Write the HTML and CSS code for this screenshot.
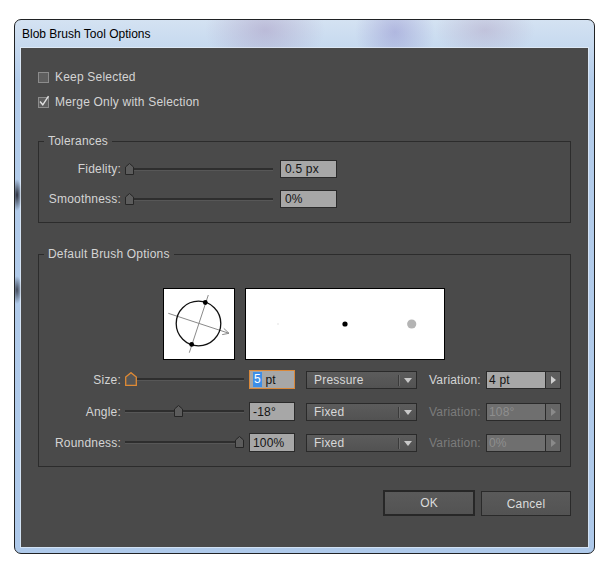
FILE: index.html
```html
<!DOCTYPE html>
<html>
<head>
<meta charset="utf-8">
<link rel="stylesheet" href="styles.css">
</head>
<body>
<div class="window">
  <div class="titlebar"><span class="title">Blob Brush Tool Options</span></div>
  <div class="client">
    <div class="check"><span class="box"></span><span>Keep Selected</span></div>
    <div class="check second"><span class="box"><svg width="13" height="13" viewBox="0 0 13 13"><polyline points="2,6.5 4.8,9.8 10.5,1.2" fill="none" stroke="#e0e0e0" stroke-width="1.4"/></svg></span><span>Merge Only with Selection</span></div>

    <fieldset class="group tol">
      <legend>Tolerances</legend>
      <div class="row">
        <span class="lbl">Fidelity:</span>
        <div class="slider tslider"><div class="track"></div><svg class="thumb" style="left:0px" width="9" height="12" viewBox="0 0 9 12"><polygon points="0.5,4 4.5,0.5 8.5,4 8.5,11.5 0.5,11.5" fill="#5c5c5c" stroke="#262626"/></svg></div>
        <span class="field tfield">0.5 px</span>
      </div>
      <div class="row next">
        <span class="lbl">Smoothness:</span>
        <div class="slider tslider"><div class="track"></div><svg class="thumb" style="left:0px" width="9" height="12" viewBox="0 0 9 12"><polygon points="0.5,4 4.5,0.5 8.5,4 8.5,11.5 0.5,11.5" fill="#5c5c5c" stroke="#262626"/></svg></div>
        <span class="field tfield">0%</span>
      </div>
    </fieldset>

    <fieldset class="group brush">
      <legend>Default Brush Options</legend>
      <div class="previews">
        <div class="pv pv1">
          <svg width="70" height="70" viewBox="0 0 70 70">
            <line x1="44.3" y1="6" x2="25.3" y2="63.7" stroke="#8a8a8a" stroke-width="1"/>
            <line x1="4.3" y1="24.3" x2="65" y2="44.3" stroke="#8a8a8a" stroke-width="1"/>
            <polyline points="59.8,39.4 65,44.3 58.2,45.6" fill="none" stroke="#8a8a8a" stroke-width="1"/>
            <circle cx="34.5" cy="34.5" r="22.3" fill="none" stroke="#111" stroke-width="1.3"/>
            <circle cx="41.3" cy="13.5" r="2.4" fill="#000"/>
            <circle cx="27.7" cy="55.4" r="2.4" fill="#000"/>
          </svg>
        </div>
        <div class="pv pv2">
          <svg width="198" height="70" viewBox="0 0 198 70">
            <circle cx="32" cy="35" r="0.7" fill="#d8d8d8"/>
            <circle cx="99" cy="35" r="2.6" fill="#000"/>
            <circle cx="165.7" cy="35" r="4.6" fill="#b4b4b4"/>
          </svg>
        </div>
      </div>

      <div class="row brow first">
        <span class="lbl">Size:</span>
        <div class="slider bslider"><div class="track"></div><svg class="thumb" style="left:0px;top:2px" width="12" height="14" viewBox="0 0 12 14"><polygon points="0.7,5 6,0.7 11.3,5 11.3,13.3 0.7,13.3" fill="#555" stroke="#e08a34" stroke-width="1.3"/></svg></div>
        <span class="field bfield focus"><span class="sel">5</span> pt</span>
        <span class="dd">Pressure<span class="sep"></span><span class="arr"></span></span>
        <span class="vlbl">Variation:</span>
        <span class="vfield"><span class="vval">4 pt</span><span class="vbtn"><span class="rarr"></span></span></span>
      </div>
      <div class="row brow second">
        <span class="lbl">Angle:</span>
        <div class="slider bslider"><div class="track"></div><svg class="thumb" style="left:49px" width="9" height="12" viewBox="0 0 9 12"><polygon points="0.5,4 4.5,0.5 8.5,4 8.5,11.5 0.5,11.5" fill="#5c5c5c" stroke="#262626"/></svg></div>
        <span class="field bfield">-18°</span>
        <span class="dd">Fixed<span class="sep"></span><span class="arr"></span></span>
        <span class="vlbl off">Variation:</span>
        <span class="vfield off"><span class="vval">108°</span><span class="vbtn"><span class="rarr"></span></span></span>
      </div>
      <div class="row brow third">
        <span class="lbl">Roundness:</span>
        <div class="slider bslider"><div class="track"></div><svg class="thumb" style="left:110px" width="9" height="12" viewBox="0 0 9 12"><polygon points="0.5,4 4.5,0.5 8.5,4 8.5,11.5 0.5,11.5" fill="#5c5c5c" stroke="#262626"/></svg></div>
        <span class="field bfield">100%</span>
        <span class="dd">Fixed<span class="sep"></span><span class="arr"></span></span>
        <span class="vlbl off">Variation:</span>
        <span class="vfield off"><span class="vval">0%</span><span class="vbtn"><span class="rarr"></span></span></span>
      </div>
    </fieldset>

    <div class="buttons">
      <span class="btn ok">OK</span>
      <span class="btn cancel">Cancel</span>
    </div>
  </div>
</div>
</body>
</html>
```
FILE: styles.css
```css
html, body {
  margin: 0;
  padding: 0;
  background: #ffffff;
}
body {
  font-family: "Liberation Sans", Arial, sans-serif;
  font-size: 12px;
  line-height: 16px;
}
.window {
  box-sizing: border-box;
  margin: 19px 0 0 14px;
  width: 581px;
  height: 535px;
  border: 1px solid #202224;
  border-radius: 7px;
  padding: 0 6px 6px 6px;
  display: flex;
  flex-direction: column;
  background:
    radial-gradient(ellipse 5px 16px at 2px 175px, rgba(20,20,30,0.85), rgba(20,20,30,0) 100%),
    radial-gradient(ellipse 5px 14px at 2px 270px, rgba(20,20,30,0.7), rgba(20,20,30,0) 100%),
    radial-gradient(ellipse 60px 40px at 250px 10px, rgba(150,120,170,0.35), rgba(150,120,170,0) 100%),
    radial-gradient(ellipse 40px 40px at 380px 12px, rgba(120,110,190,0.35), rgba(120,110,190,0) 100%),
    radial-gradient(ellipse 50px 30px at 470px 10px, rgba(160,130,170,0.3), rgba(160,130,170,0) 100%),
    linear-gradient(180deg, #d4e2f2 0px, #c6d9ef 28px, #b4cdeb 60px, #aec9ea 100%);
}
.titlebar {
  height: 28px;
  flex: none;
  display: flex;
}
.title {
  color: #000;
  padding: 6px 0 0 1px;
  line-height: 16px;
  font-size: 12px;
}
.client {
  flex: 1;
  background: #4a4a4a;
  box-shadow: 0 0 0 1px rgba(240,245,252,0.55);
  padding: 21px 17px 0 17px;
  color: #d4d4d4;
  letter-spacing: 0.2px;
}
.check {
  display: flex;
  align-items: center;
  height: 16px;
}
.check.second {
  margin-top: 9px;
}
.box {
  box-sizing: border-box;
  width: 11px;
  height: 11px;
  border: 1px solid #8c8c8c;
  background: #5e5e5e;
  margin-right: 6px;
  position: relative;
}
.box svg {
  position: absolute;
  left: -1px;
  top: -3px;
}
.group {
  box-sizing: border-box;
  margin: 23px 0 0 0;
  width: 533px;
  border: 1px solid #2c2c2c;
  padding: 0;
  min-width: 0;
}
.group legend {
  margin-left: 5px;
  padding: 0 4px;
  line-height: 16px;
  color: #d4d4d4;
}
.tol {
  padding: 11px 0 14px 0;
}
.brush {
  padding: 26px 0 14px 0;
}
.row {
  display: flex;
  align-items: center;
  height: 18px;
}
.row.next {
  margin-top: 12px;
}
.lbl {
  width: 82px;
  text-align: right;
  flex: none;
  color: #d4d4d4;
}
.slider {
  position: relative;
  margin-left: 4px;
  height: 18px;
  display: flex;
  align-items: center;
  flex: none;
}
.tslider { width: 148px; }
.bslider { width: 119px; }
.track {
  width: 100%;
  height: 3px;
  background: #2e2e2e;
  border-bottom: 1px solid #575757;
  box-sizing: border-box;
}
.thumb {
  position: absolute;
  top: 3px;
  display: block;
}
.field {
  box-sizing: border-box;
  height: 18px;
  border: 1px solid #2a2a2a;
  background: #a7a7a7;
  color: #141414;
  padding-left: 4px;
  line-height: 16px;
  flex: none;
  display: flex;
  align-items: center;
  white-space: pre;
}
.tfield {
  margin-left: 7px;
  width: 57px;
}
.brow {
  height: 19px;
}
.brow.first { margin-top: 10px; }
.brow.second { margin-top: 13px; }
.brow.third { margin-top: 12px; }
.brow .slider { height: 19px; }
.bfield {
  margin-left: 5px;
  width: 46px;
  height: 19px;
  padding-left: 3px;
}
.bfield.focus {
  border-color: #d9883a;
}
.sel {
  background: #3d8ee8;
  color: #fff;
  padding: 0 1px;
  line-height: 15px;
}
.previews {
  display: flex;
  gap: 10px;
  height: 72px;
  padding-left: 124px;
}
.pv {
  box-sizing: border-box;
  height: 72px;
  background: #fff;
  border: 1px solid #000;
}
.pv svg { display: block; }
.pv1 { width: 72px; }
.pv2 { width: 200px; }
.dd {
  box-sizing: border-box;
  position: relative;
  margin-left: 11px;
  width: 111px;
  height: 18px;
  border: 1px solid #2a2a2a;
  background: linear-gradient(180deg, #5c5c5c, #525252);
  color: #d8d8d8;
  padding-left: 7px;
  line-height: 16px;
  flex: none;
}
.sep {
  position: absolute;
  left: 91px;
  top: 3px;
  width: 1px;
  height: 11px;
  background: #3a3a3a;
  border-right: 1px solid #6a6a6a;
}
.arr {
  position: absolute;
  left: 97px;
  top: 6px;
  width: 0;
  height: 0;
  border-left: 4px solid transparent;
  border-right: 4px solid transparent;
  border-top: 5px solid #c8c8c8;
}
.vlbl {
  margin-left: 12px;
  width: 57px;
  flex: none;
  color: #d4d4d4;
}
.vlbl.off { color: #7c7c7c; }
.vfield {
  box-sizing: border-box;
  width: 75px;
  height: 18px;
  border: 1px solid #2a2a2a;
  display: flex;
  flex: none;
}
.vval {
  flex: 1;
  background: #a7a7a7;
  color: #141414;
  padding-left: 2px;
  line-height: 16px;
}
.vbtn {
  width: 14px;
  background: #5e5e5e;
  border-left: 1px solid #2a2a2a;
  position: relative;
}
.rarr {
  position: absolute;
  left: 5px;
  top: 4px;
  width: 0;
  height: 0;
  border-top: 4px solid transparent;
  border-bottom: 4px solid transparent;
  border-left: 5px solid #d0d0d0;
}
.vfield.off .vval {
  background: #6f6f6f;
  color: #8e8e8e;
}
.vfield.off .vbtn { background: #666; }
.vfield.off .rarr { border-left-color: #8a8a8a; }
.buttons {
  margin-top: 23px;
  width: 533px;
  display: flex;
  justify-content: flex-end;
  align-items: center;
  gap: 6px;
}
.btn {
  box-sizing: border-box;
  display: flex;
  align-items: center;
  justify-content: center;
  background: linear-gradient(180deg, #5a5a5a, #535353);
  color: #dcdcdc;
}
.ok {
  width: 92px;
  height: 26px;
  border: 2px solid #272727;
}
.cancel {
  width: 90px;
  height: 25px;
  border: 1px solid #2a2a2a;
  margin-top: 1px;
}
```
